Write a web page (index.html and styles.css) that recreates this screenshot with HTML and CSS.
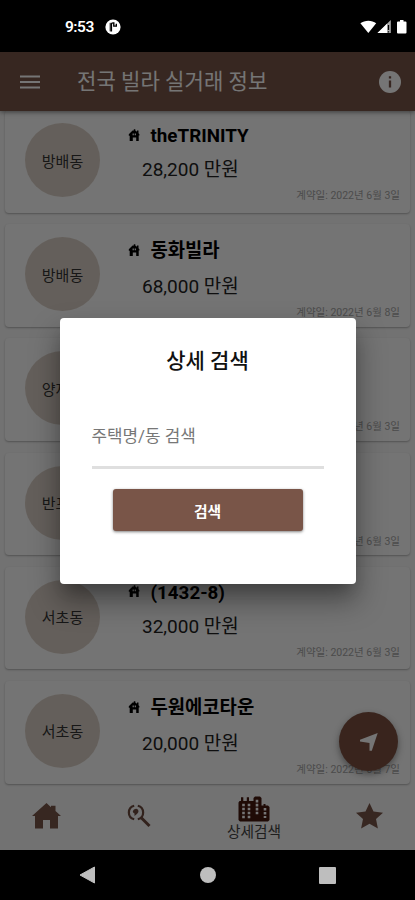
FILE: index.html
```html
<!DOCTYPE html>
<html lang="ko">
<head>
<meta charset="utf-8">
<title>전국 빌라 실거래 정보</title>
<link rel="stylesheet" href="styles.css">
</head>
<body>
<svg width="0" height="0" class="defs">
  <symbol id="house" viewBox="0 0 12 12"><path d="M.8 5.200 4.600 1.500h1.200V.3h1.500v1.200L9 2.800V1.400h1.500v2.800l.9 1v1.300h-.7V12H8.200V8.600H4.800V12H1.700V6.700H.8z"/><path d="M4.600 4.600h1.200v1.700H4.600zm2.100 0h1.200v1.700H6.700z" fill="#fff"/></symbol>
</svg>
<div class="phone">
  <header class="status">
    <span class="time">9:53</span>
    <svg class="badge" width="16" height="16" viewBox="0 0 16 16"><circle cx="8" cy="8" r="7.6" fill="#fff"/><path d="M6.400 12.600V5.200c0-1 .6-1.300 1.600-1.300h.8v3.200h2.500V4.800" fill="none" stroke="#000" stroke-width="1.400"/><path d="M5.200 3.800v8.600" stroke="#000" stroke-width="1"/></svg>
    <svg class="signals" width="48" height="16" viewBox="0 0 48 16"><path d="M.4 4.200C4.700.8 12 .8 16.200 4.200L8.300 14z" fill="#fff"/><path d="M17.500 14 30.800 1v13z" fill="#aaa"/><path d="M17.500 14 27 4.700V14z" fill="#fff"/><path d="M28.500 6v5m0 1.300v1.200" stroke="#000" stroke-width="1.300"/><path d="M38 2.500h2V1h3.500v1.500h2q1 0 1 1v10q0 1-1 1H38q-1 0-1-1v-10q0-1 1-1" fill="#fff"/></svg>
  </header>
  <main class="app">
    <div class="appbar">
      <svg width="20" height="14" viewBox="0 0 20 14"><path d="M0 1.500h20M0 7h20M0 12.500h20" stroke="#fff" stroke-width="2"/></svg>
      <h1>전국 빌라 실거래 정보</h1>
      <svg width="22" height="22" viewBox="0 0 22 22"><circle cx="11" cy="11" r="11" fill="#fff"/><path d="M11 5.200v2.400M11 9.500v7" stroke="#795548" stroke-width="2.300"/></svg>
    </div>
    <div class="list">
      <article class="card latin"><div class="dong">방배동</div><div class="info"><h2><svg width="12" height="12"><use href="#house"/></svg>theTRINITY</h2><p class="price">28,200 만원</p><p class="date">계약일: 2022년 6월 3일</p></div></article>
      <article class="card"><div class="dong">방배동</div><div class="info"><h2><svg width="12" height="12"><use href="#house"/></svg>동화빌라</h2><p class="price">68,000 만원</p><p class="date">계약일: 2022년 6월 8일</p></div></article>
      <article class="card"><div class="dong">양재동</div><div class="info"><h2></h2><p class="price"></p><p class="date">계약일: 2022년 6월 3일</p></div></article>
      <article class="card"><div class="dong">반포동</div><div class="info"><h2></h2><p class="price"></p><p class="date">계약일: 2022년 6월 3일</p></div></article>
      <article class="card latin"><div class="dong">서초동</div><div class="info"><h2><svg width="12" height="12"><use href="#house"/></svg>(1432-8)</h2><p class="price">32,000 만원</p><p class="date">계약일: 2022년 6월 3일</p></div></article>
      <article class="card"><div class="dong">서초동</div><div class="info"><h2><svg width="12" height="12"><use href="#house"/></svg>두원에코타운</h2><p class="price">20,000 만원</p><p class="date">계약일: 2022년 6월 7일</p></div></article>
    </div>
    <nav class="tabs">
      <a><svg width="29" height="26" viewBox="0 0 29 26"><path d="M14.500 0 19 4.200V2.800h4.500V8L29 13h-3v12.500h-8V17h-7v8.500H3V13H0z" fill="#795548"/></svg></a>
      <a><svg width="24" height="24" viewBox="0 0 24 24" fill="none" stroke="#6d4a3e"><path d="M7.200 1.700A7 7 0 0 0 7.200 15.300M10.800 1.700A7 7 0 0 1 10.800 15.300" stroke-width="2.200"/><path d="M9 4.800a2.600 2.600 0 0 1 2.400 3.200Q11 9.600 7.500 12V9.500Q5.600 8.800 5.800 7.300 6.500 4.900 9 4.800z" fill="#6d4a3e" stroke="none"/><path d="M14 13.500 22.500 22" stroke-width="3"/></svg></a>
      <a class="on"><svg width="32" height="26" viewBox="0 0 32 26"><path d="M1.500 5H3V1.300h2.300V5h3.500V1.300H11V5h4.500V2L17 .5h5L23.500 2v7.500h2V8h2v1.500H30l1.500 1.500v13L30 25.500H2L.5 24V6.500z" fill="#45180f"/><path d="M5.500 7.700v14.500M11 7.700v14.500M19 3.800v14.500M27 12v10" stroke="#fff" stroke-width="2.600" stroke-dasharray="2.600 1.400"/></svg><span>상세검색</span></a>
      <a><svg width="27" height="26" viewBox="0 0 27 26"><path d="m13.500 0 4 8.600 9.500 1.100-7 6.300 1.900 9.500-8.400-4.700-8.400 4.700L7 16 0 9.700l9.500-1.100z" fill="#795548"/></svg></a>
    </nav>
    <div class="fab"><svg width="20" height="20" viewBox="0 0 20 20"><path d="M18.700 1 12.800 18.800h-2.300V11L1 9.500V7.700z" fill="#fff"/></svg></div>
    <div class="scrim">
      <section class="dialog">
        <h3>상세 검색</h3>
        <div class="field">주택명/동 검색</div>
        <button>검색</button>
      </section>
    </div>
  </main>
  <footer class="sysnav">
    <svg width="18" height="20" viewBox="0 0 18 20"><path d="M15.500 2v16L1 10z" fill="#bebebe" stroke="#bebebe" stroke-linejoin="round"/></svg>
    <i class="dot"></i>
    <i class="square"></i>
  </footer>
</div>
</body>
</html>
```
FILE: styles.css
```css
* { box-sizing: border-box; margin: 0; padding: 0; }
body { font-family: Roboto, "Noto Sans CJK KR", sans-serif; background: #000; }
.defs { position: absolute; }
.phone { width: 415px; height: 900px; display: flex; flex-direction: column; overflow: hidden; }
.status { height: 52px; display: flex; align-items: center; padding: 2px 7px 0 65px; color: #fff; }
.time { font-size: 15.500px; font-weight: 600; width: 40px; letter-spacing: -.5px; }
.signals { margin-left: auto; }
.app { height: 798px; position: relative; display: flex; flex-direction: column; background: #f8f8f8; }
.appbar { height: 59px; flex: none; display: flex; align-items: center; padding: 1px 14px 0 20px; background: #795548; color: #fff; box-shadow: 0 1px 5px rgba(0,0,0,.5); z-index: 1; }
.appbar h1 { font-size: 21.100px; font-weight: 400; margin-left: 37px; flex: 1; line-height: 30px; white-space: nowrap; }
.list { flex: 1; min-height: 0; overflow: hidden; padding: 0 5px; }
.card { height: 102.700px; margin-bottom: 11.500px; display: flex; padding-left: 20px; background: #fcfcfc; border-radius: 4px; box-shadow: 0 1px 2px rgba(0,0,0,.28); }
.card:first-child { margin-top: -1px; }
.dong { width: 75px; height: 74px; margin-top: 13px; border-radius: 50%; background: #dbd0c6; color: #333; font-size: 15px; display: flex; align-items: center; justify-content: center; flex: none; }
.info { flex: 1; padding: 13px 10px 0 28px; }
.info h2 { height: 29px; line-height: 29px; font-size: 18.800px; font-weight: 700; color: #000; display: flex; align-items: center; gap: 10.500px; white-space: nowrap; }
.info h2 svg { margin-top: -3px; }
.price { height: 42px; line-height: 42px; padding-left: 14px; font-size: 19px; color: #222; }
.date { margin-top: -1px; text-align: right; font-size: 10.500px; line-height: 12px; color: #a5a5a5; white-space: nowrap; }
.latin h2 { height: 26px; line-height: 26px; }
.tabs { height: 62px; flex: none; display: grid; grid-template-columns: 93px 91px 140px 91px; background: #f8f8f8; }
.tabs a { display: flex; flex-direction: column; align-items: center; padding-top: 15px; }
.tabs a:nth-child(2) { padding-top: 16px; }
.tabs .on { padding-top: 8px; }
.on span { font-size: 14.700px; line-height: 21px; color: #444; }
.fab { position: absolute; left: 339px; top: 660px; width: 59px; height: 59px; border-radius: 50%; background: #7d5040; display: flex; align-items: center; justify-content: center; box-shadow: 0 3px 7px rgba(0,0,0,.4); }
.scrim { position: absolute; inset: 0; background: rgba(0,0,0,.54); z-index: 2; display: flex; justify-content: center; align-items: flex-start; padding-top: 266px; }
.dialog { width: 296px; height: 266px; background: #fff; border-radius: 4px; box-shadow: 0 11px 15px -7px rgba(0,0,0,.2), 0 16px 28px 2px rgba(0,0,0,.35); display: flex; flex-direction: column; align-items: center; padding-top: 27px; }
.dialog h3 { font-size: 21px; line-height: 32px; font-weight: 500; color: #111; }
.field { width: 232px; height: 48px; margin-top: 44px; border-bottom: 3px solid #dfdfdf; font-size: 16.900px; line-height: 30px; color: #777; }
.dialog button { width: 190px; height: 42px; margin-top: 20px; border: 0; border-radius: 3px; background: #795548; color: #fff; font: 700 14.800px Roboto, "Noto Sans CJK KR", sans-serif; box-shadow: 0 1px 3px rgba(0,0,0,.5); }
.sysnav { height: 50px; display: flex; align-items: center; justify-content: space-between; padding: 0 79px; background: #000; }
.dot { width: 16px; height: 16px; border-radius: 50%; background: #bebebe; }
.square { width: 17px; height: 17px; border-radius: 1px; background: #bebebe; }
```
